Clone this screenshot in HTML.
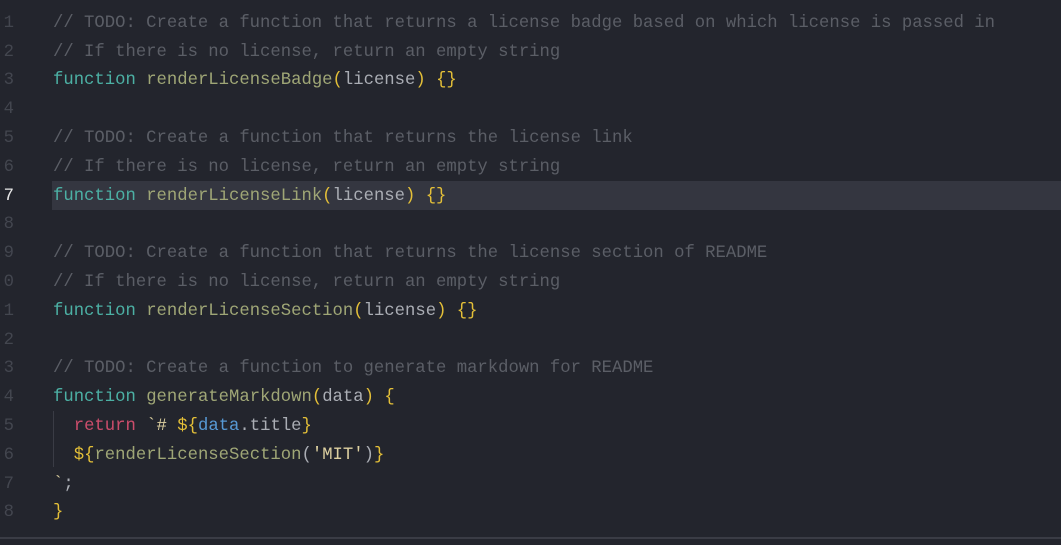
<!DOCTYPE html>
<html><head><style>
html,body{margin:0;padding:0;background:#23252d;width:1061px;height:545px;overflow:hidden}
.ed{position:relative;width:1061px;height:545px;font-family:"Liberation Mono",monospace;font-size:17.25px}
.l{position:absolute;left:0;height:29px;line-height:29px;width:1061px;white-space:pre}
.n{position:absolute;left:-4px;width:18px;text-align:right;color:#43464f}
.c{position:absolute;left:53px;color:#5b5e66}
.hl{background:#343640}
.k{color:#4cb0a4}.f{color:#9fa676}.p{color:#e3bf38}.v{color:#aaadb4}.r{color:#cc4d6b}.b{color:#5799d4}.s{color:#ddd0a0}
</style></head><body><div class="ed">
<div class="l" style="top:9px"><span class="n">1</span><span class="c">// TODO: Create a function that returns a license badge based on which license is passed in</span></div>
<div class="l" style="top:38px"><span class="n">2</span><span class="c">// If there is no license, return an empty string</span></div>
<div class="l" style="top:66px"><span class="n">3</span><span class="c"><span class="k">function</span> <span class="f">renderLicenseBadge</span><span class="p">(</span><span class="v">license</span><span class="p">) {}</span></span></div>
<div class="l" style="top:95px"><span class="n">4</span></div>
<div class="l" style="top:124px"><span class="n">5</span><span class="c">// TODO: Create a function that returns the license link</span></div>
<div class="l" style="top:153px"><span class="n">6</span><span class="c">// If there is no license, return an empty string</span></div>
<div class="l hl" style="top:181px;left:52px;width:1009px"></div>
<div class="l" style="top:182px"><span class="n" style="color:#e6e6e6">7</span><span class="c"><span class="k">function</span> <span class="f">renderLicenseLink</span><span class="p">(</span><span class="v">license</span><span class="p">) {}</span></span></div>
<div class="l" style="top:210px"><span class="n">8</span></div>
<div class="l" style="top:239px"><span class="n">9</span><span class="c">// TODO: Create a function that returns the license section of README</span></div>
<div class="l" style="top:268px"><span class="n">0</span><span class="c">// If there is no license, return an empty string</span></div>
<div class="l" style="top:297px"><span class="n">1</span><span class="c"><span class="k">function</span> <span class="f">renderLicenseSection</span><span class="p">(</span><span class="v">license</span><span class="p">) {}</span></span></div>
<div class="l" style="top:326px"><span class="n">2</span></div>
<div class="l" style="top:354px"><span class="n">3</span><span class="c">// TODO: Create a function to generate markdown for README</span></div>
<div class="l" style="top:383px"><span class="n">4</span><span class="c"><span class="k">function</span> <span class="f">generateMarkdown</span><span class="p">(</span><span class="v">data</span><span class="p">) {</span></span></div>
<div class="l" style="top:412px"><span class="n">5</span><span class="c">  <span class="r">return</span> <span class="s">`# </span><span class="p">${</span><span class="b">data</span><span class="v">.title</span><span class="p">}</span></span></div>
<div class="l" style="top:441px"><span class="n">6</span><span class="c">  <span class="p">${</span><span class="f">renderLicenseSection</span><span class="v">(</span><span class="s">'MIT'</span><span class="v">)</span><span class="p">}</span></span></div>
<div class="l" style="top:470px"><span class="n">7</span><span class="c"><span class="s">`</span><span class="v">;</span></span></div>
<div class="l" style="top:498px"><span class="n">8</span><span class="c"><span class="p">}</span></span></div>
<div style="position:absolute;left:53px;top:411px;width:1px;height:56px;background:#3a3c45"></div>
<div style="position:absolute;left:0;top:537px;width:1061px;height:2px;background:#3a3c45"></div>
</div></body></html>
